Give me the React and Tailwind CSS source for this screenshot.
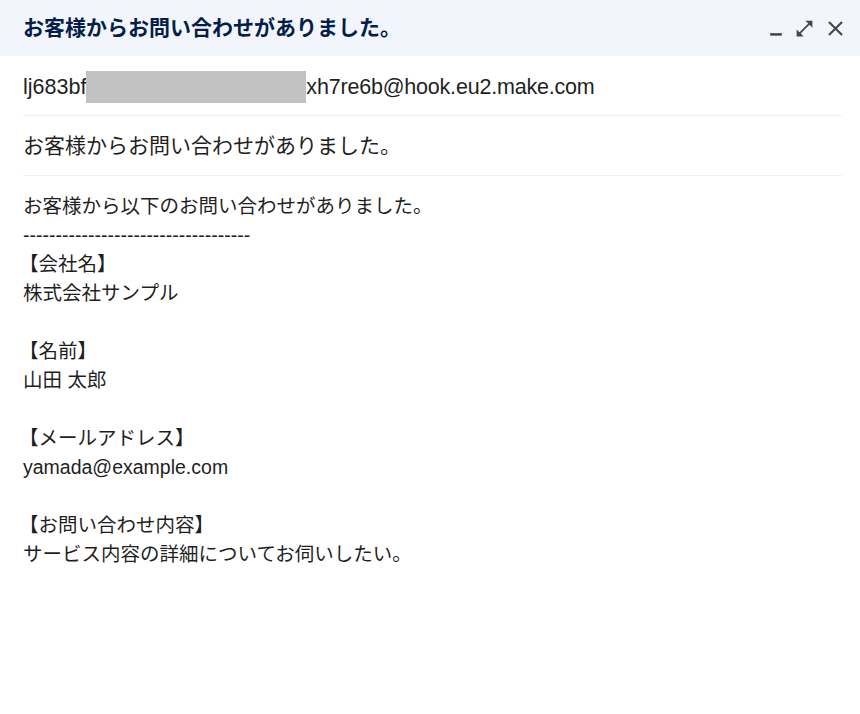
const latin = { fontFamily: '"Liberation Sans", Arial, "Noto Sans CJK JP", sans-serif' };

const MinimizeIcon = () => (
  <svg viewBox="0 0 24 24" className="w-[20px] h-[20px]" fill="#444746">
    <path d="M5 17h14v3H5z" />
  </svg>
);

const ExpandIcon = () => (
  <svg viewBox="0 0 24 24" className="w-[21px] h-[21px]" fill="#444746">
    <path d="M21 11V3h-8l3.29 3.29-10 10L3 13v8h8l-3.29-3.29 10-10z" />
  </svg>
);

const CloseIcon = () => (
  <svg viewBox="0 0 24 24" className="w-[25px] h-[25px]" fill="#444746">
    <path d="M19 6.41L17.59 5 12 10.59 6.41 5 5 6.41 10.59 12 5 17.59 6.41 19 12 13.41 17.59 19 19 17.59 13.41 12z" />
  </svg>
);

const fields = [
  { label: "【会社名】", value: "株式会社サンプル" },
  { label: "【名前】", value: "山田 太郎" },
  { label: "【メールアドレス】", value: "yamada@example.com" },
  { label: "【お問い合わせ内容】", value: "サービス内容の詳細についてお伺いしたい。" },
];

export default function App() {
  return (
    <div className="w-[860px] h-[714px] bg-white text-[#1f1f1f] overflow-hidden" style={latin}>
      {/* Header */}
      <div className="h-[56px] bg-[#f2f6fc] flex items-center justify-between pl-[23px] pr-[12px]">
        <span className="text-[21px] font-semibold text-[#041e49]">お客様からお問い合わせがありました。</span>
        <div className="flex items-center gap-[8px] pt-[1px]">
          <MinimizeIcon />
          <ExpandIcon />
          <CloseIcon />
        </div>
      </div>

      {/* Recipient */}
      <div className="ml-[23px] mr-[18px] h-[60px] flex items-center border-b border-[#eceff3] text-[21.5px] pt-[3px]">
        <span>lj683bf</span>
        <span className="inline-block w-[220px] h-[32px] bg-[#c2c2c2]" />
        <span className="tracking-[-0.2px]">xh7re6b@hook.eu2.make.com</span>
      </div>

      {/* Subject */}
      <div className="ml-[23px] mr-[18px] h-[60px] flex items-center border-b border-[#eceff3] text-[21px]">
        お客様からお問い合わせがありました。
      </div>

      {/* Body */}
      <div className="px-[23px] pt-[16px] text-[19.5px] leading-[29px]">
        <div>お客様から以下のお問い合わせがありました。</div>
        <div>-----------------------------------</div>
        {fields.map((f, i) => (
          <div key={f.label} className={i > 0 ? "mt-[29px]" : ""}>
            <div className="-ml-[4px]">{f.label}</div>
            <div>{f.value}</div>
          </div>
        ))}
      </div>
    </div>
  );
}
